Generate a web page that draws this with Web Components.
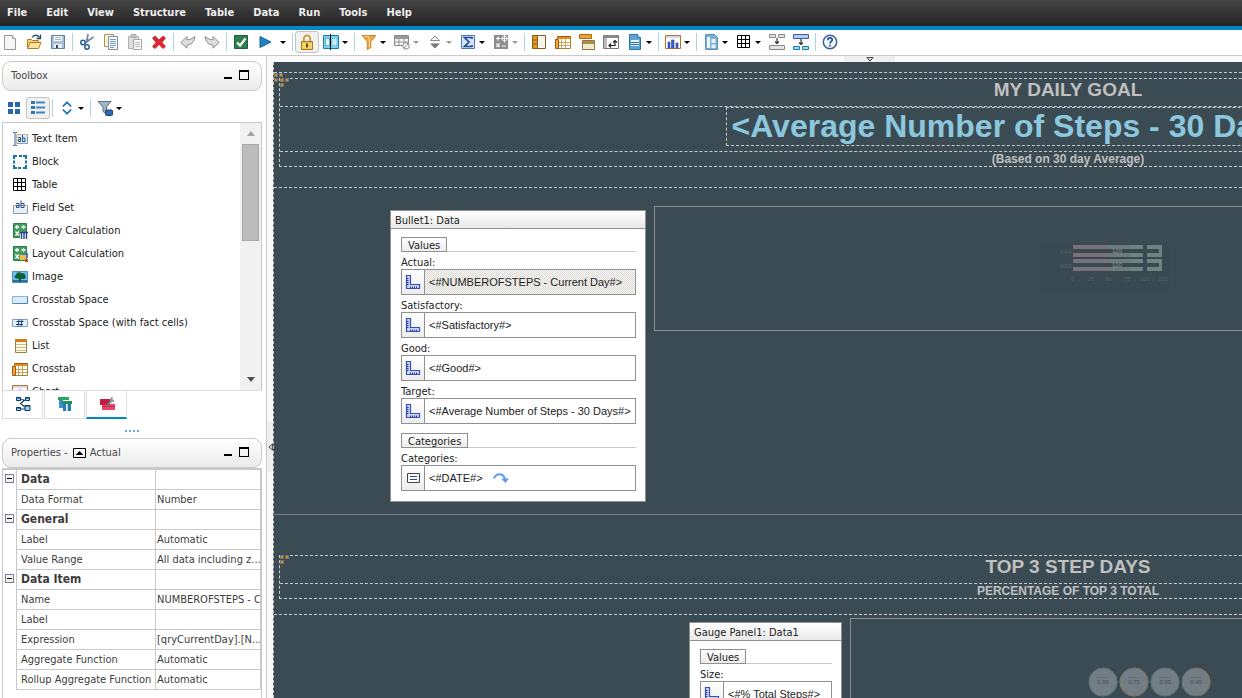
<!DOCTYPE html>
<html lang="en">
<head>
<meta charset="utf-8">
<title>Report Studio</title>
<style>
  html, body { height: 100%; margin: 0; }
  body {
    --ui: "DejaVu Sans Condensed", "Noto Sans", sans-serif;
    --line: #c9c9c9;
    --accent: #008abf;
    font: 11px/16px var(--ui);
    color: #222;
    background: #fff;
    overflow: hidden;
  }
</style>
</head>
<body>
<report-studio></report-studio>

<script>
const ICONS = {
  new: `<path d="M2.500 1.500h8l3 3v11h-11z" fill="#f6f6f6" stroke="#9a9a9a"/><path d="M10.500 1.500v3h3" fill="#fff" stroke="#9a9a9a"/>`,
  open: `<path d="M1.500 13.500v-8h4l1 1h6v2" fill="#f7d07a" stroke="#b8791a"/><path d="M1.500 14.500l2.500-6h11l-2.500 6z" fill="#ffe3a0" stroke="#b8791a"/><path d="M6 3.500c2-3 6-3 7.500 0M14.500.5v4h-4" fill="none" stroke="#27476e" stroke-width="1.300"/>`,
  save: `<path d="M1.500 1.500h13v13h-13z" fill="#a9c0da" stroke="#5d7fa6"/><path d="M4 2h8v5H4z" fill="#fff"/><path d="M5 3.500h6M5 5.500h6" stroke="#9bb"/><path d="M4 10h8v4H4z" fill="#e8eef5"/><path d="M6 11h2v3H6z" fill="#345"/>`,
  cut: `<path d="M9 0L7.500 9M14.500 3L6 9" stroke="#7389a5" stroke-width="1.800"/><circle cx="4" cy="8.500" r="2.200" fill="none" stroke="#2a5c97" stroke-width="1.500"/><circle cx="8" cy="13" r="2.200" fill="none" stroke="#2a5c97" stroke-width="1.500"/>`,
  copy: `<path d="M1.500.5h9v12h-9z" fill="#fbf3d4" stroke="#a89352"/><path d="M5.500 2.500h9v13h-9z" fill="#fff" stroke="#8090a8"/><path d="M7 5.500h6M7 7.500h6M7 9.500h6M7 11.500h6M7 13.500h4" stroke="#6a9ad0"/>`,
  paste: `<path d="M1.500 2.500h10v12h-10z" fill="#ddd" stroke="#b0b0b0"/><path d="M4 .5h5v3H4z" fill="#c8c8c8" stroke="#aaa"/><path d="M6.500 5.500h8v10h-8z" fill="#fafafa" stroke="#a8a8a8"/><path d="M8 8.500h5M8 10.500h5M8 12.500h5" stroke="#bbb"/>`,
  del: `<path d="M1.500 4l2.500-2 4 4 4-4 2.500 2-3.500 4.500 3.500 4-2.500 2-4-4-4 4-2.500-2 3.500-4z" fill="#e02531" stroke="#b3121d" stroke-width=".7"/>`,
  undo: `<path d="M.8 8.500L7 2.500v3.200c3 .2 5.500-1 7.800-3.500-.2 5-3 8.500-7.800 9v3z" fill="#dedede" stroke="#8b8b8b"/>`,
  redo: `<path d="M15.200 8.500L9 2.500v3.200c-3 .2-5.500-1-7.800-3.500.2 5 3 8.500 7.800 9v3z" fill="#dedede" stroke="#8b8b8b"/>`,
  validate: `<path d="M1.500 1.500h13v13h-13z" fill="#2d7f4e" stroke="#1f5f38"/><path d="M4 8.500l3 3 5.500-7" fill="none" stroke="#fff" stroke-width="2.200"/>`,
  run: `<path d="M3 2.500v11L14 8z" fill="#2183c4" stroke="#12629c"/>`,
  lock: `<path d="M4.800 8V5a3.200 3.700 0 016.400 0v3" fill="none" stroke="#c9993a" stroke-width="1.800"/><path d="M2.500 7.500h11v8h-11z" fill="#f3c850" stroke="#a57715"/><path d="M3 10.500h10M3 13h10" stroke="#fbe497"/><path d="M7 9.500h2v4H7z" fill="#6b4a0a"/>`,
  page: `<path d="M.5 1.500h15v13H.5z" fill="#7dd3f0" stroke="#0f7fae"/><path d="M2.500 4.500h4v7h-4z" fill="#e6f8ff" stroke="#0f7fae" stroke-dasharray="1 1"/><path d="M9 4.500h5v7H9z" fill="#c2ecfa" stroke="#4db3d8" stroke-dasharray="1 1"/><path d="M7.500 0v16" stroke="#000"/>`,
  funnel: `<path d="M1 1.500h14L9.800 7.500v6L6.200 15.500v-8z" fill="#f0a542" stroke="#bd741a" stroke-width=".8"/><path d="M3.500 2.500h4l1 5v6" fill="none" stroke="#ffd596"/>`,
  suppress: `<path d="M.5 1.500h14v10H.5z" fill="#f3f3f3" stroke="#8a8a8a"/><path d="M1 2h13v3H1z" fill="#999"/><path d="M1 8h13M5 2v9M10 2v9" stroke="#999"/><circle cx="12" cy="12" r="3.200" fill="#fff" stroke="#888"/><path d="M10 14l4-4" stroke="#888"/>`,
  sortg: `<path d="M3.500 6.500L8 2l4.500 4.500z" fill="#fff" stroke="#888"/><path d="M3 9.500h10L8 14.500z" fill="#777"/>`,
  sum: `<path d="M1.500 1.500h13v13h-13z" fill="#d5e4fa" stroke="#4a78bc"/><path d="M12 3.500H4.500L9 8l-4.500 4.500H12M12 3v2M12 11v2" fill="none" stroke="#234a8e" stroke-width="1.700"/>`,
  calcg: `<path d="M1 1h14v14H1z" fill="#8d8d8d"/><path d="M3 4.500h4M5 2.500v4M3.500 9.500l3 3.500M6.500 9.500l-3 3.500M9 12h4" stroke="#fff" stroke-width="1.200"/><path d="M11.500.5v8M7.500 4.500h8" stroke="#fff"/><circle cx="11.500" cy="4.500" r="2.500" fill="none" stroke="#eee"/>`,
  frame: `<path d="M1.500 1.500h13v13h-13z" fill="#fff" stroke="#8a5a1c"/><path d="M2 2h4v12H2z" fill="#e79a20"/><path d="M2 6h4M2 10h4M6.500 2v12" stroke="#8a5a1c"/><path d="M8 3h5v10H8z" fill="#f7f2e6"/>`,
  crosstab: `<path d="M2.500 2.500h13v12h-13z" fill="#fff" stroke="#a88432"/><path d="M3 2h12v3H3z" fill="#e98b1a"/><path d="M0 5h3v9H0z" fill="#efa63a"/><path d="M3 8.500h12M3 11.500h12M6.500 5v9M10.500 5v9" stroke="#c9a65a"/><path d="M.5 5.500h3v9h-3zM2.500 2.500h13" fill="none" stroke="#a3560c"/>`,
  sections: `<path d="M.5.5h12v4H.500z" fill="#f0a33a" stroke="#b2660e"/><path d="M3.500 6.500h12v9h-12z" fill="#f4ead0" stroke="#8a7440"/><path d="M4 7h11v3H4z" fill="#a98d4a"/>`,
  swap: `<path d="M.5 1.500h15v13H.5z" fill="#fff" stroke="#777"/><path d="M1 1h14v3H1z" fill="#888"/><path d="M1 4h3v10H1z" fill="#bbb"/><path d="M6 11.500h6v-5M8 9.500l-2 2 2 2M10 8.500l2-2 2 2" fill="none" stroke="#222" stroke-width="1.200"/>`,
  doc: `<path d="M2.500.5h8l3 3v12h-11z" fill="#5fa6d6" stroke="#2c75aa"/><path d="M10.500.5v3h3" fill="#fff" stroke="#2c75aa"/><path d="M4 6h8v6H4z" fill="#e8f4fc"/><path d="M4 8.500h8M4 10.500h8" stroke="#2c75aa"/>`,
  chart: `<path d="M.5 1.500h15v13H.5z" fill="#fff" stroke="#b0722a"/><path d="M1 2h14v2H1z" fill="#ddd6ea"/><path d="M3 8h2v6H3zM6.500 6h2.500v8H6.500zM11 9h2v5h-2z" fill="#3e5fd0" stroke="#2b44a5" stroke-width=".6"/>`,
  layout: `<path d="M2.500.5h9l3 3v12h-12z" fill="#7ab2d6" stroke="#5b93b8"/><path d="M4 3h3v11H4zM8.500 5h4v4h-4zM8.500 10.500h4V14h-4z" fill="#eaf5fb"/>`,
  grid: `<path d="M1.500 1.500h12v12h-12zM5.500 1.500v12M9.500 1.500v12M1.500 5.500h12M1.500 9.500h12" fill="#fff" stroke="#000"/>`,
  mergeg: `<path d="M.5.5h6v3h-6zM9.500.5h6v3h-6zM.5 11.500h15v4H.5z" fill="#e3e3e3" stroke="#888"/><path d="M8 4v6M6 7.500l2 2 2-2" stroke="#333" fill="none" stroke-width="1.200"/>`,
  split: `<path d="M.5.5h15v4H.5z" fill="#b7cdf5" stroke="#3459b0"/><path d="M.5 12.500h6v3h-6zM9.500 12.500h6v3h-6z" fill="#9adcf6" stroke="#1d7fae"/><path d="M8 5v6M6 8.500l2 2 2-2" stroke="#333" fill="none" stroke-width="1.200"/>`,
  help: `<circle cx="8" cy="8" r="6.700" fill="#f3f8ff" stroke="#37609c" stroke-width="1.500"/><path d="M5.800 6.200c0-3 4.600-2.900 4.400-.2-.1 1.500-2.200 1.500-2.200 3.500M8 10.800v1.700" fill="none" stroke="#234a8e" stroke-width="1.700"/>`,
  tiles: `<path d="M2 2h5v5H2zM9 2h5v5H9zM2 9h5v5H2zM9 9h5v5H9z" fill="#2768a8"/>`,
  rows: `<path d="M1 1h4v3H1zM1 6h4v3H1zM1 11h4v3H1z" fill="#3378b4"/><path d="M6 2.500h9M6 7.500h9M6 12.500h9" stroke="#3f87bf" stroke-width="2"/>`,
  sortb: `<path d="M3.800 6.500L8 2.300l4.200 4.200M3.800 9.500L8 13.700l4.200-4.200" fill="none" stroke="#1d73ae" stroke-width="1.700"/>`,
  filterdb: `<path d="M1 1.500h13L9.500 7v7L6 11.500V7z" fill="#9fb6c6" stroke="#587488"/><rect x="8.500" y="10" width="7" height="5.500" rx="1" fill="#2a6ba6" stroke="#1a4774"/>`,
  text: `<path d="M4.500 3.500h11v9h-11z" fill="#dfeaf4" stroke="#c3b988"/><path d="M5 12.500h10.500v-9" fill="none" stroke="#8a9db5"/><path d="M1 1.500h1.500l.5.500.5-.5H5M3 2v12M1 14.500h1.500l.5-.5.5.5H5" fill="none" stroke="#3b6294"/><path d="M6 6.500h2.500v4H6.500v-2h2M10.500 4v6.500h2.500v-3.500h-2.500" fill="none" stroke="#23508a"/>`,
  block: `<path d="M2 5V2h3M7 2h3M11 2h3v3M14 6.500v3M14 11v3h-3M9 14H6M5 14H2v-3M2 9.500v-3" fill="none" stroke="#1470ae" stroke-width="2"/>`,
  field: `<path d="M1.500 5.500h14v8h-14z" fill="#e8f0f7" stroke="#8a9bb0"/><path d="M1 5.500h2M12 5.500h3.500" stroke="#c2b780"/><path d="M4 3.500h3v4H4.500v-2H7M9 .5v7h3v-4H9" fill="none" stroke="#23508a"/>`,
  qcalc: `<path d="M1.500.5h13v14h-13z" fill="#459d62" stroke="#2d7d4a"/><path d="M3 4h4M5 2v4M9.500 4h4M11.500 2v.8M11.500 5.200V6M3.500 8.500l3.500 4M7 8.500l-3.500 4" stroke="#fff" stroke-width="1.300"/><path d="M8 9h8v7H8z" fill="#fff"/><path d="M8 9.500h8M9.500 10v6M12 10v6M14.500 10v6" stroke="#243f86" stroke-width="1.400"/>`,
  lcalc: `<path d="M1.500.5h13v14h-13z" fill="#459d62" stroke="#2d7d4a"/><path d="M3 4h4M5 2v4M9.500 4h4M11.500 2v.8M11.500 5.200V6M3.500 8.500l3.500 4M7 8.500l-3.500 4" stroke="#fff" stroke-width="1.300"/><path d="M11 7h5v5h-5z" fill="#4a76c0"/><path d="M8 9h6v5H8z" fill="#e9c14a"/><path d="M13 13h3v3h-3z" fill="#d04a3a"/>`,
  image: `<path d="M.5 2.500h15v11H.5z" fill="#6cc0ea" stroke="#4c8fb8"/><path d="M1 11h14v2H1z" fill="#2b6f9e"/><path d="M3 9c-1-2 0-3 1-3C4 3 8 2.500 9 4c3 0 4.500 1 4.500 3 1 2-.5 3-2.500 3H9v2.500H7V10z" fill="#0f5f35"/>`,
  space: `<path d="M.5 4.500h15v7H.5z" fill="#d8eaf4" stroke="#8fb4d4"/><path d="M.5 11.500h15v-7" fill="none" stroke="#4c86bd"/>`,
  spacef: `<path d="M.5 4.500h15v7H.5z" fill="#e6f1f8" stroke="#7ba5cc"/><path d="M7 4.500L6 11.500M10 4.500L9 11.500M4.500 6.500h7M4 9.500h7" stroke="#1c3f78"/>`,
  list: `<path d="M3.500 1.500h11v13h-11z" fill="#fffbe8" stroke="#93804a"/><path d="M3 1h12v3H3z" fill="#d97a12"/><path d="M4 6.500h10M4 9.500h10M4 12.500h10" stroke="#cfbf86"/>`,
  flow: `<path d="M1.500 1.500h4v3h-4zM10.500 1.500h4v3h-4zM1.500 11.500h4v3h-4zM10 9.500h5v5h-5z" fill="#9fd4f2" stroke="#123a66"/><path d="M1 2h5M10 2h5M1 12h5M10 10h5M5.500 3.500L9 4M10 4L5.500 7.500 10 11M5.500 13H10" fill="none" stroke="#123a66" stroke-width="1.200"/>`,
  pages: `<path d="M1 1h11v3H1z" fill="#27a862"/><path d="M2 4h4v8H2z" fill="#3e8fc9"/><path d="M5 5h10v3H5z" fill="#1d9354"/><path d="M6 8h3v7H6zM10.500 8H14v7h-3.500z" fill="#2979b8"/><path d="M10 8v7" stroke="#cfe6f7"/>`,
  tools: `<path d="M3 8h13v6H3z" fill="#f0456a"/><path d="M1 3h10v6H1z" fill="#c01f3e"/><path d="M3 10.500h13" stroke="#c22546"/><path d="M7 10.500L12.500 4.500" stroke="#777" stroke-width="2"/><path d="M11 4.500c0-2 1-3.500 2.500-4v3l2 .5c-.5 2-2 2.500-4 2z" fill="#999"/>`,
  measure: `<path d="M1.500 1.500h4v9h9v4h-13z" fill="#c9d8ff" stroke="#3a4db5" stroke-width="1.200"/><path d="M2 4.500h1.500M2 6.500h1.500M2 8.500h1.500M2 10.500h1.500M5.500 14v-1.500M7.500 14v-1.500M9.500 14v-1.500M11.500 14v-1.500" stroke="#26348f"/>`,
  category: `<path d="M2.500 3.500h12v9h-12z" fill="#fff" stroke="#444"/><path d="M5 6.500h7M5 9.500h7" stroke="#2a4a8c"/>`,
  arc: `<path d="M1 8.500C3 3 10 2.500 12 9" fill="none" stroke="#5c9bf5" stroke-width="2"/><path d="M8 8.500h8l-3.500 4.500z" fill="#5c9bf5"/>`,
  member: `<path d="M2.500 3.500h12v9h-12z" fill="#fff" stroke="#000"/><path d="M4.500 10h8L8.500 6z" fill="#000"/>`
};

const define = (tag, render) => customElements.define(tag, class extends HTMLElement {
  connectedCallback() {
    if (!this.shadowRoot) this.attachShadow({ mode: 'open' }).innerHTML = render(this);
  }
});
const RESET = `*{box-sizing:border-box}button{font:inherit;color:inherit;border:0;background:none;padding:0;margin:0}`;

define('ui-icon', el => `
  <style>:host{display:block;width:16px;height:16px;flex:none}svg{display:block;width:100%;height:100%}</style>
  <svg viewBox="0 0 16 16" aria-hidden="true">${ICONS[el.getAttribute('name')]}</svg>`);

define('tool-button', el => `
  <style>${RESET}
    :host{display:flex;flex:none;align-items:center}
    .main{width:24px;height:22px;padding:0 4px}
    :host([pressed]) .main{padding:0 3px;border:1px solid #c4c4c4;border-radius:3px;background:#f1f1f1}
    .caret{display:flex;width:10px;height:22px;margin-left:-1px;align-items:center}
    .caret::after{content:"";border:3px solid transparent;border-top-color:#000;border-bottom:0}
    :host([disabled]) .caret::after{border-top-color:#999}
    :host([wide]) .caret{width:13px;margin-left:0;padding-left:3px}
  </style>
  <button class="main" aria-label="${el.getAttribute('name')}"><ui-icon name="${el.getAttribute('name')}"></ui-icon></button>
  ${el.hasAttribute('menu') || el.hasAttribute('wide') ? '<button class="caret" aria-label="More"></button>' : ''}`);

define('tool-sep', () => `
  <style>:host{display:block;flex:none;width:1px;height:18px;margin:0 2px;background:#a9d3ea}</style>`);

define('menu-bar', () => `
  <style>${RESET}
    :host{display:block;flex:none;background:linear-gradient(#454545,#232323);border-bottom:4px solid var(--accent)}
    nav{display:flex;gap:19px;height:26px;padding:0 7px;align-items:center;font-weight:bold;color:#eee}
  </style>
  <nav>${['File','Edit','View','Structure','Table','Data','Run','Tools','Help'].map(t => `<button>${t}</button>`).join('')}</nav>`);

define('tool-bar', () => `
  <style>
    :host{display:flex;flex:none;align-items:center;height:26px;padding-bottom:1px;border-bottom:1px solid var(--line);box-sizing:border-box;background:#fff}
    tool-button:first-of-type{margin-left:-2px}
  </style>
  ${[ 'new','open','save','|','cut','copy','paste','del','|','undo','redo','|','validate','run+w','|','lock*','page+','|',
      'funnel+','suppress+-','sortg+-','sum+','calcg+-','|','frame','crosstab','sections','swap','doc+','|','chart+','|',
      'layout+','grid+','mergeg','split','|','help' ].map(k => {
    if (k === '|') return '<tool-sep></tool-sep>';
    const name = k.match(/^[a-z]+/)[0];
    return `<tool-button name="${name}"${k.includes('+') ? ' menu' : ''}${k.endsWith('-') ? ' disabled' : ''}${k.endsWith('+w') ? ' wide' : ''}${k.endsWith('*') ? ' pressed' : ''}></tool-button>`;
  }).join('')}`);

define('panel-header', () => `
  <style>${RESET}
    :host{display:flex;align-items:center;gap:5px;height:30px;box-sizing:border-box;padding:0 12px 0 8px;border:1px solid var(--line);border-radius:9px;background:linear-gradient(#fff,#ebebeb);color:#484848}
    .title{display:flex;align-items:center;gap:3px;flex:1}
    button{width:10px;height:10px;margin:0 0 2px 2px}
    .min{height:3px;width:8px;align-self:flex-end;border-bottom:2px solid #000;margin-bottom:11px}
    .max{border:1px solid #000;border-top-width:2px}
  </style>
  <div class="title"><slot></slot></div>
  <button class="min" aria-label="Minimize"></button><button class="max" aria-label="Maximize"></button>`);

define('tool-box', () => `
  <style>${RESET}
    :host{display:block}
    .bar{display:flex;align-items:center;height:31px;padding:3px 0 0}
    .view{display:flex;height:269px;border:1px solid var(--line);border-bottom-color:#ddd}
    ul{flex:1;margin:0;padding:4px 0 0;list-style:none;overflow:hidden}
    li{display:flex;align-items:center;gap:4px;height:23px;padding-left:9px;white-space:nowrap}
    .scroll{display:flex;flex-direction:column;align-items:center;width:21px;background:#f1f1f1}
    .scroll i{border:4px solid transparent}
    .up{border-bottom:5px solid #a3a3a3!important;border-top:0!important;margin:8px 0}
    .thumb{width:17px;height:97px;background:#bcbcbc;border:1px solid #a8a8a8}
    .down{border-top:5px solid #505050!important;border-bottom:0!important;margin:auto 0 8px}
    .tabs{display:flex;gap:1px}
    .tabs button{display:flex;justify-content:center;width:41px;height:28px;padding-top:5px;border:1px solid #ddd;border-top:0}
    .tabs .on{border-bottom:2px solid var(--accent)}
  </style>
  <panel-header>Toolbox</panel-header>
  <div class="bar">
    <tool-button name="tiles"></tool-button><tool-button name="rows" pressed></tool-button><tool-sep></tool-sep>
    <tool-button name="sortb" menu></tool-button><tool-sep></tool-sep><tool-button name="filterdb" menu></tool-button>
  </div>
  <div class="view">
    <ul>${[['text','Text Item'],['block','Block'],['grid','Table'],['field','Field Set'],['qcalc','Query Calculation'],['lcalc','Layout Calculation'],['image','Image'],['space','Crosstab Space'],['spacef','Crosstab Space (with fact cells)'],['list','List'],['crosstab','Crosstab'],['chart','Chart']]
      .map(([i, t]) => `<li><ui-icon name="${i}"></ui-icon>${t}</li>`).join('')}</ul>
    <div class="scroll"><i class="up"></i><div class="thumb"></div><i class="down"></i></div>
  </div>
  <div class="tabs"><button aria-label="Source"><ui-icon name="flow"></ui-icon></button><button aria-label="Pages"><ui-icon name="pages"></ui-icon></button><button class="on" aria-label="Toolbox"><ui-icon name="tools"></ui-icon></button></div>`);

define('property-sheet', () => `
  <style>${RESET}
    :host{display:flex;flex-direction:column;flex:1}
    .body{flex:1;border:1px solid var(--line);border-width:0 1px}
    table{width:100%;table-layout:fixed;border-collapse:separate;border-spacing:0;color:#3c3c3c;border-top:2px solid var(--line)}
    col.g{width:14px}col.n{width:139px}
    td,th{height:20px;padding:0 0 0 4px;border:0 solid var(--line);border-width:0 1px 1px 0;font-weight:normal;text-align:left;line-height:19px;white-space:nowrap;overflow:hidden}
    td:first-child{padding:0;border-width:0 1px 0 0;vertical-align:top}
    td:last-child{padding-left:1px}
    .group th{font-weight:bold;font-size:12px}
    td button{display:block;width:9px;height:9px;margin:4px 0 0 2px;padding:0 1px;border:1px solid #7a7ab0;background:#f4f4e6}
    td button::after{content:"";display:block;height:1px;background:#000}
  </style>
  <panel-header>Properties - <ui-icon name="member"></ui-icon>Actual</panel-header>
  <div class="body"><table><colgroup><col class="g"><col class="n"><col></colgroup>
  ${[['Data'],['Data Format','Number'],['General'],['Label','Automatic'],['Value Range','All data including z...'],['Data Item'],['Name','NUMBEROFSTEPS - C'],['Label',''],['Expression','[qryCurrentDay].[N...'],['Aggregate Function','Automatic'],['Rollup Aggregate Function','Automatic']]
    .map(([n, v]) => v === undefined
      ? `<tr class="group"><td><button aria-label="Collapse"></button></td><th scope="row">${n}</th><td></td></tr>`
      : `<tr><td></td><th scope="row">${n}</th><td>${v}</td></tr>`).join('')}
  </table></div>`);

define('data-card', el => `
  <style>
    :host{display:block;flex:none;box-sizing:border-box;border:1px solid #909090;background:#fff;color:#222}
    header{height:17px;padding-left:4px;line-height:19px;border-bottom:1px solid #909090;background:linear-gradient(#fff,#e9e9e9);white-space:nowrap}
    .body{padding:8px 9px 10px 10px}
  </style>
  <header>${el.getAttribute('heading')}</header><div class="body"><slot></slot></div>`);

define('card-group', el => `
  <style>
    :host{display:block}
    :host(:not(:first-child)){margin-top:9px}
    .tab{display:flex;align-items:flex-end;height:15px}
    .tab span{height:15px;box-sizing:border-box;padding:0 6px;line-height:15px;border:1px solid #909090;background:linear-gradient(#fff,#ececec)}
    .tab::after{content:"";flex:1;height:1px;background:#c8c8c8}
  </style>
  <div class="tab"><span>${el.getAttribute('name')}</span></div><slot></slot>`);

define('data-slot', el => `
  <style>
    :host{display:block;white-space:nowrap}
    .label{height:17px;line-height:21px}
    .box{display:flex;height:26px;box-sizing:border-box;border:1px solid #909090}
    .icon{display:flex;flex:none;align-items:center;justify-content:center;width:22px;border-right:1px solid #909090;background:linear-gradient(#fff,#ececec)}
    .value{display:flex;align-items:center;gap:10px;flex:1;padding-left:4px;font-family:"Liberation Sans",Arial,sans-serif}
    :host([selected]) .value{background:repeating-conic-gradient(#dcdcdc 0 25%,#f8f4ee 0 50%) 0 0/2px 2px}
  </style>
  <div class="label">${el.getAttribute('label')}</div>
  <div class="box"><div class="icon"><ui-icon name="${el.getAttribute('icon') || 'measure'}"></ui-icon></div><div class="value"><slot></slot></div></div>`);

define('bullet-preview', () => {
  const bar = y => `<path d="M31 ${y}h36v4H31zM31 ${y + 8}h36v4H31z" fill="#77717a"/><path d="M67 ${y}h21v4H67zM67 ${y + 8}h21v4H67z" fill="#6f7a7a"/>
    <path d="M88 ${y}h13v4H88zM88 ${y + 8}h13v4H88zM105 ${y}h15v12h-15v-4h12v-4h-12z" fill="#6d8580"/>`;
  return `
  <style>:host{display:block;width:128px;height:50px}svg{display:block}text{font:6px "Liberation Sans",sans-serif;fill:#53616a}.v text{fill:#8a9196}</style>
  <svg width="128" height="50" viewBox="2 0 128 50">
    <rect width="128" height="49" fill="#394951"/>${bar(1)}${bar(15)}
    <text x="18" y="10">AAA</text><text x="18" y="24">BBB</text><g class="v"><text x="70" y="9">120</text><text x="70" y="23">120</text></g>
    ${['0','25','50','75','100','125'].map((t, i) => `<text x="${31 + i * 18}" y="37" text-anchor="middle">${t}</text>`).join('')}
  </svg>`;
});

define('gauge-preview', () => `
  <style>:host{display:block}svg{display:block}text{font:6px "Liberation Sans",sans-serif;fill:#454d52;text-anchor:middle}</style>
  <svg width="124" height="30" viewBox="0 0 124 30">
  ${[['0.66', '#55788b', 60], ['0.75', '#8a7458', 70], ['0.95', '#55788b', 86], ['0.45', '#8a7458', 40]].map(([v, c, len], i) => {
    const x = 15 + i * 31;
    return `<circle cx="${x}" cy="15" r="14" fill="#727e83" stroke="#64727a"/><circle cx="${x}" cy="15" r="14" fill="none" stroke="${c}" stroke-dasharray="${len} 100" transform="rotate(-90 ${x} 15)"/>
      <path d="M${x - 6} 10.500h12" stroke="#656f75"/><text x="${x}" y="17">${v}</text>`;
  }).join('')}</svg>`);

define('corner-mark', () => `
  <style>:host{position:absolute;top:0;left:0}svg{display:block}</style>
  <svg width="9" height="9">${[[0, 0], [5, 0], [0, 5]].map(([x, y]) => `<rect x="${x}" y="${y}" width="4" height="4" fill="#6f7377"/><rect x="${x + 1}" y="${y + 1}" width="2" height="2" fill="#dd8a10"/>`).join('')}</svg>`);

define('report-canvas', () => `
  <style>
    *{box-sizing:border-box}
    :host{display:block;flex:1;min-height:0;overflow:hidden;background:#3b4b53;border-left:1px dashed #c8c8c8}
    .page{width:1588px;padding-top:10px}
    .outer,.inner{position:relative;border:0 dashed #c8c8c8}
    .outer{border-width:1px 0;padding:5px 5px 20px}
    .inner{border-width:0 1px 1px}
    .row{display:flex;justify-content:center;align-items:center;border-top:1px dashed #c8c8c8;color:#c0c0c0;font:bold 12px/12px "Liberation Sans",Arial,sans-serif}
    .t{height:28px;font-size:19px;line-height:22px;padding-bottom:6px}
    .big{height:45px;align-items:flex-start}
    .big div{width:685px;height:39px;padding-left:5px;border:1px dashed #c8c8c8;font-size:32px;line-height:37px;color:#8cc7de}
    .s{height:15px;padding-bottom:1px}
    .content{display:flex;align-items:flex-start;gap:8px;padding-top:18px}
    .content data-card{margin-top:4px}
    .first{height:326px;padding-left:116px}
    .second{padding-left:415px;padding-top:3px}
    .chart{display:flex;justify-content:center;border:1px solid #8f8f8f}
    .c1{width:908px;height:125px;padding-top:37px}
    .c2{width:600px;height:127px;align-items:center}
    .band{border-top:1px solid #808080;padding-top:40px}
    .band .outer{border-top:0;padding-top:0;padding-bottom:15px}
    .bullet{width:256px}.gauge{width:153px}
  </style>
  <div class="page">
    <div class="outer"><corner-mark></corner-mark>
      <div class="inner">
        <div class="row t">MY DAILY GOAL</div>
        <div class="row big"><div>&lt;Average Number of Steps - 30 Days&gt;</div></div>
        <div class="row s">(Based on 30 day Average)</div>
        <corner-mark></corner-mark>
      </div>
    </div>
    <div class="content first">
      <data-card class="bullet" heading="Bullet1: Data">
        <card-group name="Values">
          <data-slot label="Actual:" selected>&lt;#NUMBEROFSTEPS - Current Day#&gt;</data-slot>
          <data-slot label="Satisfactory:">&lt;#Satisfactory#&gt;</data-slot>
          <data-slot label="Good:">&lt;#Good#&gt;</data-slot>
          <data-slot label="Target:">&lt;#Average Number of Steps - 30 Days#&gt;</data-slot>
        </card-group>
        <card-group name="Categories">
          <data-slot label="Categories:" icon="category">&lt;#DATE#&gt;<ui-icon name="arc"></ui-icon></data-slot>
        </card-group>
      </data-card>
      <div class="chart c1"><bullet-preview></bullet-preview></div>
    </div>
    <div class="band">
      <div class="outer">
        <div class="inner">
          <div class="row t">TOP 3 STEP DAYS</div>
          <div class="row s">PERCENTAGE OF TOP 3 TOTAL</div>
          <corner-mark></corner-mark>
        </div>
      </div>
      <div class="content second">
        <data-card class="gauge" heading="Gauge Panel1: Data1">
          <card-group name="Values"><data-slot label="Size:">&lt;#% Total Steps#&gt;</data-slot></card-group>
        </data-card>
        <div class="chart c2"><gauge-preview></gauge-preview></div>
      </div>
    </div>
  </div>`);

define('report-studio', () => `
  <style>${RESET}
    :host{display:flex;flex-direction:column;height:100vh}
    main{display:flex;flex:1;min-height:0}
    aside{display:flex;flex-direction:column;flex:none;width:267px;padding:5px 4px 0 2px;border-right:1px solid var(--line);overflow:hidden}
    .grip{width:14px;height:2px;margin:11px auto 6px;background:repeating-linear-gradient(90deg,#6ea3e8 0 2px,#fff 2px 4px)}
    .split{flex:none;width:6px;background:#fafafc}
    .split button,.fold button{display:flex;align-items:center;justify-content:center;background:#efefef}
    .split button{width:6px;height:51px;margin-top:365px}
    .stage{display:flex;flex-direction:column;flex:1;min-width:0}
    .fold{flex:none;height:6px;background:#fafafc}
    .fold button{width:51px;height:6px;margin-left:571px}
    svg{display:block}
  </style>
  <menu-bar></menu-bar><tool-bar></tool-bar>
  <main>
    <aside><tool-box></tool-box><div class="grip"></div><property-sheet></property-sheet></aside>
    <div class="split"><button aria-label="Collapse panes"><svg width="5" height="8"><path d="M4.500 .8v6.400L.8 4z" fill="#ccc" stroke="#555"/></svg></button></div>
    <div class="stage">
      <div class="fold"><button aria-label="Collapse toolbar"><svg width="8" height="5"><path d="M.8 .500h6.400L4 4.200z" fill="#ccc" stroke="#555"/></svg></button></div>
      <report-canvas></report-canvas>
    </div>
  </main>`);
</script>
</body>
</html>
